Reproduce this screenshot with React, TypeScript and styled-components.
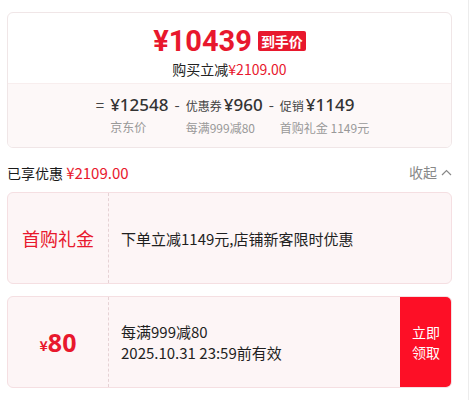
import styled, { createGlobalStyle } from 'styled-components'

const GlobalStyle = createGlobalStyle`
  body {
    margin: 0;
    background: #fff;
    font-family: 'Noto Sans CJK SC', 'Noto Sans', sans-serif;
    color: #1a1a1a;
  }
`

const RED = '#e8182d'

const Page = styled.div`
  width: 469px;
  min-height: 400px;
  box-sizing: border-box;
  border-right: 1px solid #ececec;
  padding: 12px 16px 0 7px;
`

const PriceCard = styled.div`
  border: 1px solid #f0e6e7;
  border-radius: 6px;
  overflow: hidden;
`

const PriceTop = styled.div`
  height: 71px;
  display: flex;
  flex-direction: column;
  align-items: center;
  padding-top: 10px;
  box-sizing: border-box;
  border-bottom: 1px solid #f8eeee;
`

const BigPrice = styled.div`
  display: flex;
  align-items: center;
  gap: 6px;
  height: 36px;
`

const Amount = styled.span`
  color: ${RED};
  font-family: Roboto, 'Noto Sans', sans-serif;
  font-weight: 700;
  font-size: 29px;
  line-height: 36px;
`

const Badge = styled.span`
  background: ${RED};
  color: #fff;
  font-weight: 700;
  font-size: 14px;
  line-height: 20px;
  padding: 0 3px;
  border-radius: 2px;
`

const Saved = styled.div`
  font-size: 14px;
  line-height: 18px;
  margin-top: 1px;
  color: #222;
`

const Red = styled.span<{ $size?: number }>`
  color: ${RED};
  ${({ $size }) => ($size ? `font-size: ${$size}px;` : '')}
`

const PriceBottom = styled.div`
  background: #fdf8f8;
  height: 63px;
  display: flex;
  justify-content: center;
  align-items: flex-start;
  padding-top: 10px;
  box-sizing: border-box;
  color: #444;
`

const Op = styled.span`
  font-size: 15px;
  line-height: 22px;
  margin: 0 6px;
`

const Group = styled.div`
  display: flex;
`

const Part = styled.div`
  display: flex;
  flex-direction: column;
`

const PartTop = styled.div`
  display: flex;
  align-items: baseline;
  gap: 2px;
  line-height: 22px;
`

const PartLabel = styled.span`
  font-size: 12px;
`

const PartValue = styled.span`
  font-family: 'Noto Sans', sans-serif;
  font-size: 17px;
  font-weight: 500;
  color: #333;
`

const PartNote = styled.span`
  font-size: 12px;
  color: #999;
  line-height: 20px;
  margin-top: 1px;
`

const SummaryRow = styled.div`
  display: flex;
  justify-content: space-between;
  align-items: center;
  height: 22px;
  margin-top: 13px;
  font-size: 14px;
`

const Collapse = styled.span`
  color: #888;
  display: flex;
  align-items: center;
  gap: 4px;
`

const Coupon = styled.div<{ $gap: number }>`
  display: flex;
  height: 92px;
  box-sizing: border-box;
  margin-top: ${({ $gap }) => $gap}px;
  background: #fdf5f6;
  border: 1px solid #f5dfe2;
  border-radius: 6px;
  overflow: hidden;
`

const CouponLeft = styled.div`
  width: 100px;
  border-right: 1px dashed #e6d2d5;
  display: flex;
  align-items: center;
  justify-content: center;
  color: ${RED};
`

const CouponTitle = styled.span`
  font-size: 18px;
`

const Yen = styled.span`
  font-size: 14px;
  font-weight: 700;
  margin-top: 6px;
`

const CouponNum = styled.span`
  font-family: 'Noto Sans', sans-serif;
  font-size: 25px;
  font-weight: 700;
`

const CouponBody = styled.div`
  flex: 1;
  padding-left: 12px;
  display: flex;
  flex-direction: column;
  justify-content: center;
  font-size: 15px;
  line-height: 21px;
  color: #1f1f1f;
`

const GetButton = styled.button`
  width: 52px;
  margin: -1px -1px -1px 0;
  border: none;
  background: #fd0f26;
  color: #fff;
  font-family: inherit;
  font-size: 14px;
  line-height: 20px;
  padding: 0;
`

const parts = [
  { label: '', value: '¥12548', note: '京东价' },
  { label: '优惠券', value: '¥960', note: '每满999减80' },
  { label: '促销', value: '¥1149', note: '首购礼金 1149元' },
]

export default function App() {
  return (
    <>
      <GlobalStyle />
      <Page>
        <PriceCard>
          <PriceTop>
            <BigPrice>
              <Amount>¥10439</Amount>
              <Badge>到手价</Badge>
            </BigPrice>
            <Saved>
              购买立减<Red>¥2109.00</Red>
            </Saved>
          </PriceTop>
          <PriceBottom>
            <Op>=</Op>
            {parts.map((p, i) => (
              <Group key={p.note}>
                {i > 0 && <Op>-</Op>}
                <Part>
                  <PartTop>
                    {p.label && <PartLabel>{p.label}</PartLabel>}
                    <PartValue>{p.value}</PartValue>
                  </PartTop>
                  <PartNote>{p.note}</PartNote>
                </Part>
              </Group>
            ))}
          </PriceBottom>
        </PriceCard>

        <SummaryRow>
          <span>
            已享优惠 <Red $size={15}>¥2109.00</Red>
          </span>
          <Collapse>
            收起
            <svg width="11" height="7" viewBox="0 0 11 7" fill="none">
              <path d="M1 6l4.5-4.5L10 6" stroke="#888" strokeWidth="1.2" />
            </svg>
          </Collapse>
        </SummaryRow>

        <Coupon $gap={9}>
          <CouponLeft>
            <CouponTitle>首购礼金</CouponTitle>
          </CouponLeft>
          <CouponBody>下单立减1149元,店铺新客限时优惠</CouponBody>
        </Coupon>

        <Coupon $gap={12}>
          <CouponLeft>
            <Yen>¥</Yen>
            <CouponNum>80</CouponNum>
          </CouponLeft>
          <CouponBody>
            <span>每满999减80</span>
            <span>2025.10.31 23:59前有效</span>
          </CouponBody>
          <GetButton>
            立即
            <br />
            领取
          </GetButton>
        </Coupon>
      </Page>
    </>
  )
}
